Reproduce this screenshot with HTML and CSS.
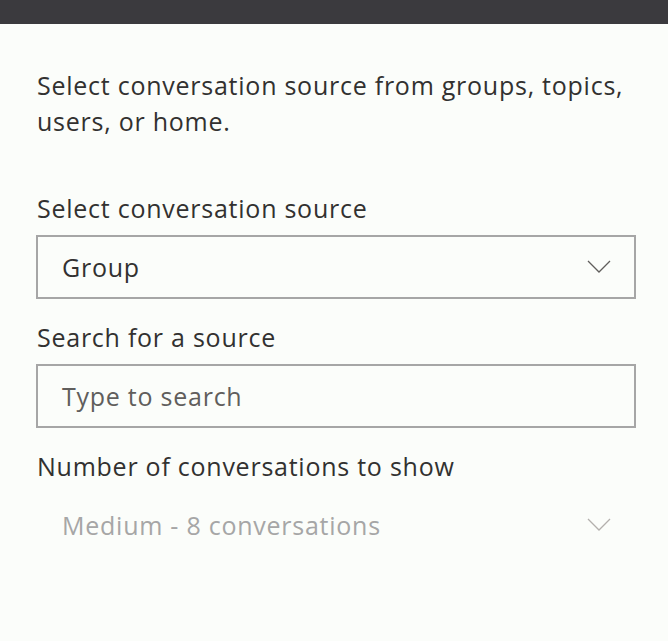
FILE: index.html
```html
<!DOCTYPE html>
<html>
<head>
<meta charset="utf-8">
<link rel="stylesheet" href="styles.css">
</head>
<body>
<div class="topbar"></div>
<main class="panel">
  <p class="intro">Select conversation source from groups, topics, users, or home.</p>
  <div class="field first">
    <div class="label">Select conversation source</div>
    <div class="box select">
      <span class="value">Group</span>
      <svg class="chev" width="24" height="14" viewBox="0 0 24 14"><path d="M1 1 L12 12 L23 1" fill="none" stroke="#605e5c" stroke-width="1.3"/></svg>
    </div>
  </div>
  <div class="field">
    <div class="label">Search for a source</div>
    <div class="box">
      <span class="placeholder">Type to search</span>
    </div>
  </div>
  <div class="field">
    <div class="label">Number of conversations to show</div>
    <div class="box select disabled">
      <span class="value">Medium - 8 conversations</span>
      <svg class="chev" width="24" height="14" viewBox="0 0 24 14"><path d="M1 1 L12 12 L23 1" fill="none" stroke="#b3b0ad" stroke-width="1.3"/></svg>
    </div>
  </div>
</main>
</body>
</html>
```
FILE: styles.css
```css
html, body {
  margin: 0;
  padding: 0;
  background: #fbfdfa;
}
body {
  font-family: "Open Sans", "Noto Sans", sans-serif;
  color: #323130;
  font-size: 25px;
  letter-spacing: 0.75px;
}
.topbar {
  height: 24px;
  background: #3b3a3e;
}
.panel {
  padding: 43px 32px 0 36px;
}
.intro {
  margin: 0 0 51px 1px;
  line-height: 36px;
  width: 600px;
}
.field {
  margin-top: 20px;
}
.field.first {
  margin-top: 0;
}
.label {
  line-height: 36px;
  margin: 0 0 9px 1px;
}
.box {
  box-sizing: border-box;
  height: 64px;
  width: 600px;
  border: 2px solid #a6a6a6;
  display: flex;
  align-items: center;
  padding: 0 23px 0 24px;
}
.select {
  justify-content: space-between;
}
.placeholder {
  color: #605e5c;
}
.disabled {
  border-color: transparent;
}
.disabled .value {
  color: #a6a6a6;
}
.chev {
  display: block;
}
```
